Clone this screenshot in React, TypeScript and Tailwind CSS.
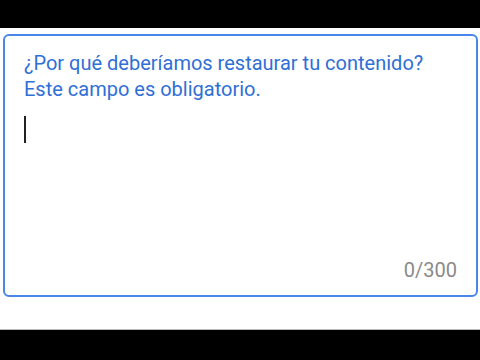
export default function App() {
  return (
    <div className="flex h-[360px] w-[480px] flex-col bg-white font-['Roboto',sans-serif]">
      <div className="h-[28px] bg-black" />

      <div className="flex-1 pl-[3px] pr-[2px] pt-[6px]">
        {/* caja de texto */}
        <div className="flex h-[263px] flex-col rounded-[6px] border-2 border-[#4a86e8] px-[19px] pb-[15px] pt-[14px]">
          <p className="text-[20px] leading-[26px] tracking-[0px] text-[#2f6fd6]">
            ¿Por qué deberíamos restaurar tu contenido?
            <br />
            Este campo es obligatorio.
          </p>
          <div className="mt-[14px] h-[27px] w-[2px] bg-[#222]" />
          <div className="mt-auto text-right text-[20px] leading-[20px] text-[#8a8a8a]">0/300</div>
        </div>
      </div>

      <div className="h-[31px] border-t border-[#bbb] bg-black" />
    </div>
  );
}
